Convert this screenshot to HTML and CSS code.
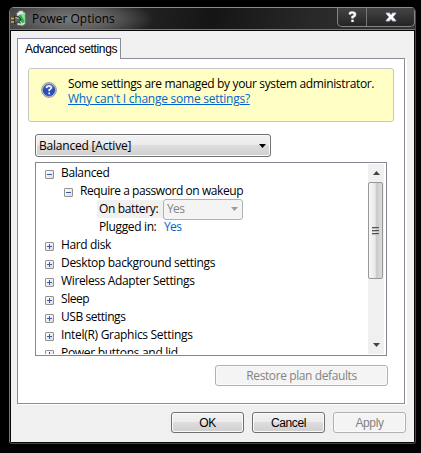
FILE: index.html
```
<!DOCTYPE html>
<html lang="en">
<head>
<meta charset="utf-8">
<title>Power Options</title>
<link rel="stylesheet" href="styles.css">
</head>
<body>
<main class="window">
  <header class="titlebar">
    <svg class="app-icon" width="17" height="17" viewBox="0 0 17 17">
      <path d="M6 3l2-1V1h4v1.500l2 .5v10.500l-1.500 1.500h-5L6 14z" fill="#dfe9e1" stroke="#a5b6a8" stroke-width=".6"/>
      <path d="M7.500 5l6-1v8.500l-5 1.500z" fill="#25b54b"/>
      <path d="M10 4.500l3.500-.5v7z" fill="#86e993"/>
      <path d="M0 8.500h4M0 12h4" stroke="#e0b020" stroke-width="1.300"/>
      <path d="M3.500 6l4 .5 2.500 2.500-1.500 3.500-5 1z" fill="#5c6260" stroke="#171b19" stroke-width=".7"/>
      <path d="M4.500 7.500l3 1M9 11l2 2v3" stroke="#c5cac6" fill="none"/>
    </svg>
    <h1 class="title"><span class="t-title">Power Options</span></h1>
    <div class="controls">
      <button class="control help" aria-label="Help"><svg width="9" height="12" viewBox="0 0 9 12"><path d="M2 3.500V2.500Q2 1.500 4 1.500Q7 1.500 7 3.500Q7 5 4.500 6V7.500M4.500 8.800V11" fill="none" stroke="#777d9b" stroke-width="3.200"/><path d="M2 3.500V2.500Q2 1.500 4 1.500Q7 1.500 7 3.500Q7 5 4.500 6V7.500M4.500 8.800V11" fill="none" stroke="#fff" stroke-width="2"/></svg></button>
      <button class="control close" aria-label="Close"><svg width="12" height="10" viewBox="0 0 12 10"><path d="M1 .8h3.500L6 2.800 7.500.8H11v1L8.200 5 11 8.200v1H7.500L6 7.200 4.500 9.200H1v-1L3.800 5 1 1.800z" fill="#fff" stroke="#777d9b" stroke-width=".7"/></svg></button>
    </div>
  </header>
  <section class="client">
    <div class="tabs"><div class="tab"><span class="t-tab">Advanced settings</span></div></div>
    <div class="panel">
      <div class="notice">
        <svg class="notice-icon" width="16" height="16" viewBox="0 0 16 16">
          <defs><linearGradient id="ball" x2="0" y2="1"><stop stop-color="#7892dc"/><stop offset=".5" stop-color="#2849b0"/><stop offset="1" stop-color="#3158c8"/></linearGradient></defs>
          <circle cx="8" cy="8" r="7.400" fill="#d5d8dc" stroke="#8b8f96" stroke-width=".9"/>
          <circle cx="8" cy="8" r="6" fill="url(#ball)" stroke="#263e91" stroke-width=".6"/>
          <path d="M5.800 6V5.500Q5.800 4 8 4Q10.300 4 10.300 5.800Q10.300 7 8.200 8V9.300M8.200 10.600V12.200" fill="none" stroke="#fff" stroke-width="1.600"/>
        </svg>
        <div class="notice-text">
          <p><span class="t-notice">Some settings are managed by your system administrator.</span></p>
          <p><a class="t-link">Why can't I change some settings?</a></p>
        </div>
      </div>
      <div class="plan"><span class="t-plan">Balanced [Active]</span><svg width="7" height="4" viewBox="0 0 7 4"><path d="M0 0h7L3.500 4z" fill="#000"/></svg></div>
      <div class="tree">
        <ul class="rows">
          <li class="row"><i class="box"></i><span class="t-r1">Balanced</span></li>
          <li class="row level2"><i class="box"></i><span class="t-r2">Require a password on wakeup</span></li>
          <li class="row level3"><span class="selected"><span class="t-r3">On battery:</span></span><span class="value-select"><span class="t-yes">Yes</span><svg width="7" height="4" viewBox="0 0 7 4"><path d="M0 0h7L3.500 4z" fill="#9b9b9b"/></svg></span></li>
          <li class="row level3"><span class="setting"><span class="t-r4">Plugged in:</span></span><span class="value t-yes">Yes</span></li>
          <li class="row"><i class="box plus"></i><span class="t-r5">Hard disk</span></li>
          <li class="row"><i class="box plus"></i><span class="t-r6">Desktop background settings</span></li>
          <li class="row"><i class="box plus"></i><span class="t-r7">Wireless Adapter Settings</span></li>
          <li class="row"><i class="box plus"></i><span class="t-r8">Sleep</span></li>
          <li class="row"><i class="box plus"></i><span class="t-r9">USB settings</span></li>
          <li class="row"><i class="box plus"></i><span class="t-r10">Intel(R) Graphics Settings</span></li>
          <li class="row"><i class="box plus"></i><span class="t-r11">Power buttons and lid</span></li>
        </ul>
        <div class="scrollbar">
          <div class="arrow"><svg width="7" height="4" viewBox="0 0 7 4"><path d="M0 4h7L3.500 0z" fill="#444"/></svg></div>
          <div class="thumb"><i></i><i></i><i></i></div>
          <div class="arrow down"><svg width="7" height="4" viewBox="0 0 7 4"><path d="M0 0h7L3.500 4z" fill="#444"/></svg></div>
        </div>
      </div>
      <button class="button disabled restore"><span class="t-restore">Restore plan defaults</span></button>
    </div>
    <footer class="actions">
      <button class="button"><span class="t-ok">OK</span></button>
      <button class="button"><span class="t-cancel">Cancel</span></button>
      <button class="button disabled"><span class="t-apply">Apply</span></button>
    </footer>
  </section>
</main>
</body>
</html>
```
FILE: styles.css
```
* { box-sizing: border-box; }
body { margin: 0; padding: 7px 0 0 9px; width: 421px; height: 453px; overflow: hidden; background: #000; color: #000; font: 12px/18px "Open Sans", "Noto Sans", sans-serif; white-space: nowrap; }
h1, p, ul { margin: 0; padding: 0; font: inherit; }
button { padding: 0; font: inherit; color: inherit; }
svg { display: block; flex: none; }
.window { width: 407px; height: 437px; border: 1px solid #474747; border-top-color: #8b8b8b; border-left-color: #777; border-radius: 5px 5px 3px 3px; padding: 0 1px 1px; background: #080808; overflow: hidden; }
.titlebar { height: 23px; margin: 0 -1px; border-bottom: 1px solid #080808; box-shadow: inset 0 -1px #777; background: radial-gradient(ellipse 82px 22px at 62px 11px, #787878 0, #606060 45%, transparent 100%), linear-gradient(100deg, #3a3a3a, #151515 50%, #292929 75%, #333); display: flex; align-items: flex-start; }
.app-icon { margin: 2px 0 0 1px; }
.title { margin: 2px 0 0 4px; flex: 1; }
.controls { display: flex; height: 19px; width: 78px; border: 1px solid #858585; border-top: 0; border-radius: 0 0 5px 5px; background: linear-gradient(#444, #252525); }
.control { border: 0; background: none; display: flex; align-items: center; justify-content: center; }
.help { width: 29px; border-right: 1px solid #777; }
.close { flex: 1; }
.client { height: 411px; background: #f0f0f0; padding: 7px 8px 9px 6px; }
.tabs { height: 20px; }
.tab { position: relative; width: 104px; height: 21px; border: 1px solid #8b8e9a; border-bottom: 0; background: #fff; padding-left: 7px; line-height: 20px; font-family: "Liberation Sans", sans-serif; }
.panel { width: 388px; height: 346px; border: 1px solid #8b8e9a; background: #fff; padding: 9px 10px; box-shadow: 2px 1px #fff; }
.notice { width: 366px; height: 54px; border: 1px solid #c7c7c7; border-radius: 3px; background: #ffffc5; display: flex; padding: 7px 0 0 12px; }
.notice-icon { margin-top: 6px; }
.notice-text { margin-left: 11px; line-height: 15px; }
.notice-text a { color: #0066cc; text-decoration: underline; }
.plan { width: 236px; height: 23px; margin: 12px 0 0 7px; border: 1px solid #707070; border-radius: 3px; box-shadow: inset 0 0 0 1px #fafafa; background: linear-gradient(#f2f2f2, #ebebeb 49%, #dddddd 50%, #cfcfcf); display: flex; align-items: center; justify-content: space-between; padding: 0 4px 0 3px; }
.tree { width: 352px; height: 194px; margin: 5px 0 0 7px; border: 1px solid #828790; padding: 1px; display: flex; overflow: hidden; background: #fff; }
.rows { flex: 1; height: 190px; overflow: hidden; list-style: none; }
.row { height: 18px; display: flex; align-items: center; padding-left: 8px; }
.box { position: relative; top: 1px; width: 9px; height: 9px; flex: none; margin-right: 7px; border: 1px solid #919191; border-radius: 1px; background: linear-gradient(#3c58a5, #3c58a5) center/5px 1px no-repeat, linear-gradient(135deg, #fff, #ddd); }
.plus { background: linear-gradient(#3c58a5, #3c58a5) center/5px 1px no-repeat, linear-gradient(#3c58a5, #3c58a5) center/1px 5px no-repeat, linear-gradient(135deg, #fff, #ddd); }
.level2 { padding-left: 27px; }
.level3 { padding-left: 60px; }
.selected, .setting { width: 66px; padding-left: 2px; height: 18px; flex: none; }
.selected { background: #f0f0f0; }
.value { color: #0066cc; }
.value-select { width: 80px; height: 21px; border: 1px solid #adb2b5; border-radius: 3px; background: #f4f4f4; color: #838383; display: flex; align-items: center; justify-content: space-between; padding: 0 4px 0 3px; position: relative; z-index: 1; flex: none; }
.value.t-yes { margin-left: 1px; }
.scrollbar { width: 17px; height: 190px; border-right: 1px solid #fff; background: #f0f0f0; display: flex; flex-direction: column; }
.arrow { height: 18px; flex: none; display: flex; align-items: center; justify-content: center; }
.down { margin-top: auto; }
.thumb { width: 15px; height: 97px; border: 1px solid #979797; border-radius: 2px; background: linear-gradient(90deg, #f7f7f7, #e8e8e9 48%, #cacace 55%, #dcdcde); display: flex; flex-direction: column; align-items: center; justify-content: center; gap: 1px; }
.thumb i { width: 7px; height: 2px; border-top: 1px solid #555; border-bottom: 1px solid #bbb; }
.button { width: 73px; height: 21px; border: 1px solid #707070; border-radius: 3px; box-shadow: inset 0 0 0 1px #fafafa; background: linear-gradient(#f2f2f2, #ebebeb 49%, #ddd 50%, #cfcfcf); display: flex; align-items: center; justify-content: center; }
.disabled { border-color: #adb2b5; background: #f4f4f4; color: #838383; }
.restore { width: 173px; margin: 9px 0 0 187px; }
.actions { display: flex; justify-content: flex-end; gap: 8px; margin-top: 8px; font-family: "Liberation Sans", sans-serif; }

.t-tab { letter-spacing: -.35px; }
.t-notice { letter-spacing: -.36px; }
.t-link { letter-spacing: -.25px; }
.t-plan { letter-spacing: -.2px; }
.t-r1, .t-r3, .t-r4, .t-r5, .t-r7 { letter-spacing: -.36px; }
.t-r2 { letter-spacing: -.43px; }
.t-r6 { letter-spacing: -.33px; }
.t-r8, .t-r9 { letter-spacing: -.45px; }
.t-r10, .t-r11 { letter-spacing: -.3px; }
.t-yes { letter-spacing: -.6px; }
.t-restore { letter-spacing: -.4px; }
.t-ok, .t-cancel, .t-apply { letter-spacing: -.4px; }
```
